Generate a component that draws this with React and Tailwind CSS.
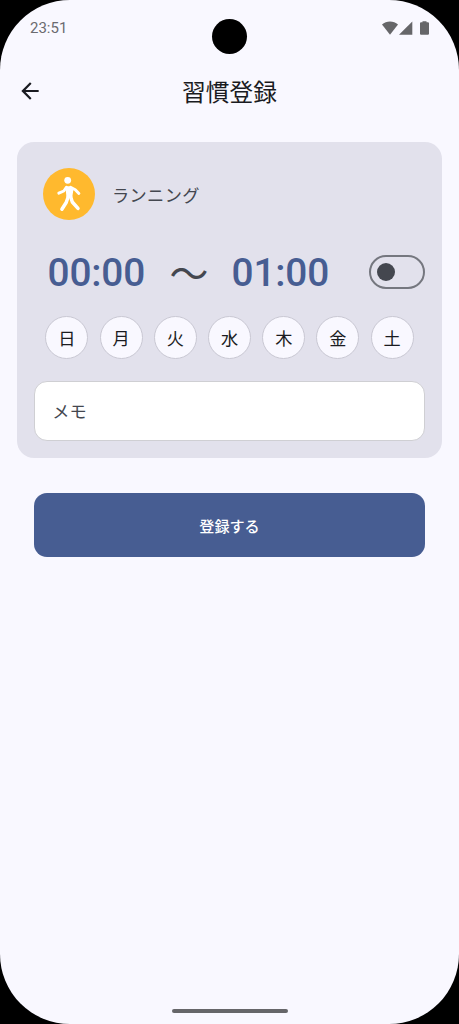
import { useState } from "react";

const days = ["日", "月", "火", "水", "木", "金", "土"];

function StatusBar() {
  return (
    <div className="relative flex h-[56px] items-center justify-between pl-[30px] pr-[30px]">
      <span className="text-[15px] leading-none text-[#6b6b70]">23:51</span>

      {/* camera hole */}
      <div className="absolute left-[212px] top-[19px] h-[35px] w-[35px] rounded-full bg-black" />

      <div className="flex items-center text-[#666669]">
        <svg width="16" height="14" viewBox="0 0 16 14" fill="currentColor">
          <path d="M8 13.700 0 3.500C2.200 1.600 5 .5 8 .5s5.800 1.100 8 3z" />
        </svg>
        <svg className="ml-[1.500px]" width="14" height="14" viewBox="0 0 14 14" fill="currentColor">
          <path d="M0 13.700 13.300.6v13.100z" />
        </svg>
        <svg className="ml-[7px]" width="9" height="14" viewBox="0 0 9 14" fill="currentColor">
          <path d="M2.500 1.300V.2h4v1.100h1.200c.7 0 1.300.5 1.300 1.200v9.900c0 .7-.6 1.300-1.300 1.300H1.300C.6 13.700 0 13.100 0 12.400V2.500c0-.7.6-1.200 1.300-1.200z" />
        </svg>
      </div>
    </div>
  );
}

function Header() {
  return (
    <header className="grid h-[69px] grid-cols-[60px_1fr_60px] items-center">
      <button className="flex justify-center">
        <svg width="26" height="26" viewBox="0 0 24 24" fill="#1a1b21">
          <path d="M20 11H7.830l5.590-5.590L12 4l-8 8 8 8 1.410-1.410L7.830 13H20v-2z" />
        </svg>
      </button>
      <h1 className="pt-[7px] text-center text-[23.700px] leading-none text-[#1a1b21]">習慣登録</h1>
    </header>
  );
}

function WalkIcon() {
  return (
    <div className="flex h-[52px] w-[52px] items-center justify-center rounded-full bg-[#ffb92e]">
      <svg width="52" height="52" viewBox="0 0 52 52" fill="none" stroke="#fff" strokeLinecap="round" strokeLinejoin="round">
        <circle cx="24.700" cy="12.300" r="3.400" fill="#fff" stroke="none" />
        <path d="M22 19.300Q25 17.300 28.500 19l2 2-1.300 8.500h-5.700l-.8-8z" fill="#fff" stroke="none" />
        <path d="M23.500 19.200 20.800 23l-5 2.200" strokeWidth="2.900" />
        <path d="M27.500 19.200 32.300 21.700 35.900 25.500" strokeWidth="2.900" />
        <path d="M25.500 28 23.200 34.500 18.900 41.200" strokeWidth="3.500" />
        <path d="M27.400 28 29.300 34 35 40.400" strokeWidth="3.500" />
      </svg>
    </div>
  );
}

function Toggle({ on, onChange }) {
  return (
    <button
      onClick={() => onChange(!on)}
      className="flex h-[34px] w-[56px] items-center rounded-full border-2 border-[#75777f] pl-[6px]"
    >
      <span className={on ? "ml-[22px] h-[18px] w-[18px] rounded-full bg-[#475d92]" : "h-[18px] w-[18px] rounded-full bg-[#44474f]"} />
    </button>
  );
}

export default function App() {
  const [allDay, setAllDay] = useState(false);
  const [selected, setSelected] = useState([]);
  const [memo, setMemo] = useState("");

  const toggleDay = (day) => {
    setSelected(selected.includes(day) ? selected.filter((d) => d !== day) : [...selected, day]);
  };

  return (
    <div className="h-[1024px] w-[459px] bg-black font-[Roboto,'Noto_Sans_CJK_JP',sans-serif]">
      <div className="flex h-full flex-col overflow-hidden rounded-[70px] bg-[#f9f8ff]">
        <StatusBar />
        <Header />

        <main className="flex-1 px-[17.300px] pt-[17px]">
          {/* habit card */}
          <section className="h-[316px] rounded-[17px] bg-[#e2e1ec] px-[17px] pt-[26px]">
            <div className="flex items-center gap-[17px] pl-[8.600px]">
              <WalkIcon />
              <span className="pt-[5px] text-[17.200px] leading-none tracking-[0.400px] text-[#44474f]">ランニング</span>
            </div>

            <div className="mt-[30px] flex h-[44px] items-center pl-[13.300px] text-[38.800px] leading-none">
              <span className="w-[122px] pt-[2px] font-medium tracking-[-0.200px] text-[#475d92]">00:00</span>
              <span className="w-[62px] pt-[7px] text-[#44474f]">〜</span>
              <span className="flex-1 pt-[2px] font-medium tracking-[-0.200px] text-[#475d92]">01:00</span>
              <Toggle on={allDay} onChange={setAllDay} />
            </div>

            <div className="mt-[22px] flex justify-between pl-[11px] pr-[11px]">
              {days.map((day) => (
                <button
                  key={day}
                  onClick={() => toggleDay(day)}
                  className={`flex h-[43px] w-[43px] items-center justify-center rounded-full border border-[#c9c8d3] pt-[5px] text-[17.200px] leading-none text-[#1a1b21] ${selected.includes(day) ? "bg-[#d9e2ff]" : "bg-[#f9f8ff]"}`}
                >
                  {day}
                </button>
              ))}
            </div>

            <input
              value={memo}
              onChange={(e) => setMemo(e.target.value)}
              placeholder="メモ"
              className="mt-[21.500px] h-[60px] w-full rounded-[13px] border border-[#cfcfd3] bg-white px-[17px] pt-[3px] text-[17.200px] text-[#1a1b21] outline-none placeholder:text-[#44474f]"
            />
          </section>

          <div className="px-[17px] pt-[34.500px]">
            <button className="h-[64.500px] w-full rounded-[13px] bg-[#475d92] pt-[5px] text-[15.100px] font-medium text-white">
              登録する
            </button>
          </div>
        </main>

        {/* gesture bar */}
        <div className="mx-auto mb-[11px] h-[4px] w-[116px] rounded-full bg-[#666669]" />
      </div>
    </div>
  );
}
